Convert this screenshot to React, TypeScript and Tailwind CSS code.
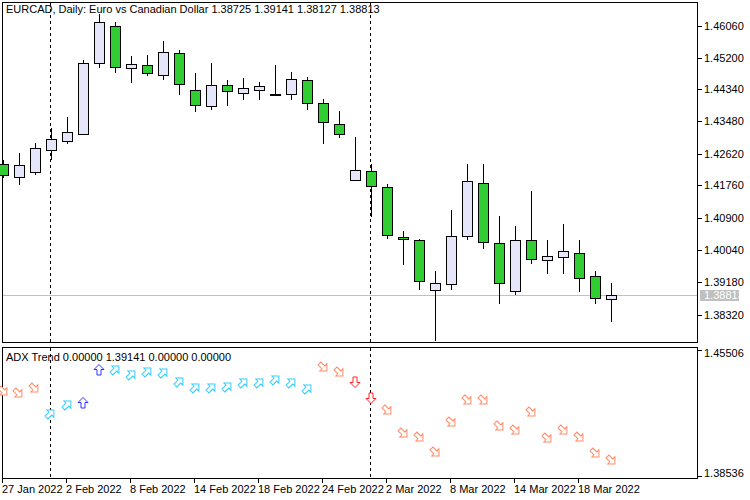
// EURCAD daily chart with ADX Trend pane
type Candle = [number, number, number, number, number, boolean]

// [x, high, bodyTop, bodyBottom, low, bull]
const candles: Candle[] = [
  [3, 160, 164, 175, 178, false],
  [19, 153, 165, 177, 185, true],
  [35, 143, 148, 172, 175, true],
  [51, 128, 139, 150, 160, true],
  [67, 117, 132, 141, 144, true],
  [83, 60, 63, 134, 134, true],
  [99, 14, 22, 63, 68, true],
  [115, 22, 26, 67, 73, false],
  [131, 56, 64, 68, 83, true],
  [147, 55, 65, 73, 76, false],
  [163, 41, 52, 75, 80, true],
  [179, 50, 53, 84, 95, false],
  [195, 73, 90, 105, 112, false],
  [211, 63, 85, 106, 110, true],
  [227, 80, 85, 91, 106, false],
  [243, 78, 88, 93, 100, true],
  [259, 82, 86, 90, 100, true],
  [275, 65, 94, 95, 96, true],
  [291, 72, 79, 94, 100, true],
  [307, 77, 80, 103, 110, false],
  [323, 99, 103, 122, 144, false],
  [339, 111, 124, 134, 138, false],
  [355, 137, 170, 180, 181, true],
  [371, 164, 171, 186, 217, false],
  [387, 184, 187, 235, 239, false],
  [403, 231, 237, 239, 265, false],
  [419, 239, 240, 281, 290, false],
  [435, 271, 283, 290, 341, true],
  [451, 210, 236, 284, 290, true],
  [467, 164, 181, 236, 240, true],
  [483, 164, 183, 242, 249, false],
  [499, 216, 243, 283, 304, false],
  [515, 226, 240, 291, 295, true],
  [531, 191, 240, 259, 264, false],
  [547, 240, 256, 260, 274, true],
  [563, 224, 251, 257, 274, true],
  [579, 240, 253, 278, 292, false],
  [595, 271, 276, 298, 304, false],
  [611, 283, 295, 299, 322, true],
]

const priceLabels: [string, number][] = [
  ['1.46060', 26], ['1.45200', 58], ['1.44340', 89], ['1.43480', 121], ['1.42620', 154],
  ['1.41760', 185], ['1.40900', 218], ['1.40040', 250], ['1.39180', 282], ['1.38320', 315],
]

// [x, y, kind] kind: ne | se | up | down
const arrows: [number, number, string][] = [
  [3, 391, 'se'], [18, 393, 'se'], [34, 388, 'se'],
  [50, 414, 'ne'], [67, 405, 'ne'], [83, 403, 'up'],
  [99, 370, 'up'], [115, 370, 'ne'], [131, 375, 'ne'], [147, 372, 'ne'], [163, 373, 'ne'],
  [179, 382, 'ne'], [195, 388, 'ne'], [211, 388, 'ne'], [227, 387, 'ne'], [243, 383, 'ne'],
  [259, 383, 'ne'], [275, 380, 'ne'], [291, 383, 'ne'], [307, 389, 'ne'],
  [323, 367, 'se'], [339, 372, 'se'], [355, 382, 'down'], [371, 398, 'down'],
  [387, 410, 'se'], [403, 433, 'se'], [419, 437, 'se'], [435, 452, 'se'], [451, 422, 'se'],
  [467, 400, 'se'], [483, 400, 'se'], [499, 426, 'se'], [515, 430, 'se'], [531, 412, 'se'],
  [547, 438, 'se'], [563, 430, 'se'], [579, 437, 'se'], [595, 453, 'se'], [611, 460, 'se'],
]

const arrowStyle: Record<string, { rot: number; color: string }> = {
  ne: { rot: 45, color: '#33ccff' },
  se: { rot: 135, color: '#ff8c66' },
  up: { rot: 0, color: '#3333ff' },
  down: { rot: 180, color: '#ff2222' },
}

const dates: [string, number][] = [
  ['27 Jan 2022', 2], ['2 Feb 2022', 66], ['8 Feb 2022', 130], ['14 Feb 2022', 194],
  ['18 Feb 2022', 258], ['24 Feb 2022', 322], ['2 Mar 2022', 386], ['8 Mar 2022', 450],
  ['14 Mar 2022', 514], ['18 Mar 2022', 578],
]

const font = { fontFamily: '"Liberation Sans", Arial, sans-serif', fontSize: 11 }

export default function App() {
  return (
    <div className="w-[750px] h-[500px] bg-white overflow-hidden">
      <svg width={750} height={500} className="block" style={font}>
        {/* pane frames */}
        <rect x={2.5} y={2.5} width={695} height={340} fill="none" stroke="#000" />
        <rect x={2.5} y={347.5} width={695} height={131} fill="none" stroke="#000" />

        {/* period separators */}
        {[50.5, 370.5].map((x) => (
          <g key={x}>
            <line x1={x} y1={3} x2={x} y2={342} stroke="#000" strokeDasharray="3 3" />
            <line x1={x} y1={348} x2={x} y2={478} stroke="#000" strokeDasharray="3 3" />
          </g>
        ))}

        {/* current price */}
        <line x1={3} y1={295.5} x2={697} y2={295.5} stroke="#c0c0c0" />

        {/* candles */}
        {candles.map(([x, hi, top, bot, lo, bull]) => (
          <g key={x}>
            <line x1={x + 0.5} y1={hi} x2={x + 0.5} y2={lo} stroke="#000" />
            <rect
              x={x - 4.5}
              y={top + 0.5}
              width={10}
              height={Math.max(bot - top, 1)}
              fill={bull ? '#e6e6fa' : '#32cd32'}
              stroke="#000"
            />
          </g>
        ))}

        <text x={6} y={13} fill="#000">EURCAD, Daily:  Euro vs Canadian Dollar  1.38725 1.39141 1.38127 1.38813</text>

        {/* price axis */}
        {priceLabels.map(([t, y]) => (
          <g key={t}>
            <line x1={698} y1={y + 0.5} x2={702} y2={y + 0.5} stroke="#000" />
            <text x={704} y={y + 4}>{t}</text>
          </g>
        ))}
        <rect x={700} y={290} width={39} height={11} fill="#c0c0c0" />
        <text x={704} y={299} fill="#fff">1.38813</text>

        {/* ADX pane */}
        <text x={6} y={361}>ADX Trend 0.00000 1.39141 0.00000 0.00000</text>
        {arrows.map(([x, y, k], i) => {
          const s = arrowStyle[k]
          return (
            <polygon
              key={i}
              points="0,-5.5 5,-0.5 2,-0.5 2,5 -2,5 -2,-0.5 -5,-0.5"
              fill="#fff"
              stroke={s.color}
              strokeWidth={1}
              transform={`translate(${x},${y}) rotate(${s.rot})`}
            />
          )
        })}
        <line x1={698} y1={350.5} x2={702} y2={350.5} stroke="#000" />
        <text x={704} y={357}>1.45506</text>
        <line x1={698} y1={476.5} x2={702} y2={476.5} stroke="#000" />
        <text x={704} y={477}>1.38536</text>

        {/* time axis */}
        {dates.map(([t, x]) => (
          <g key={t}>
            <line x1={x + 0.5} y1={479} x2={x + 0.5} y2={483} stroke="#000" />
            <text x={x} y={493}>{t}</text>
          </g>
        ))}
      </svg>
    </div>
  )
}
